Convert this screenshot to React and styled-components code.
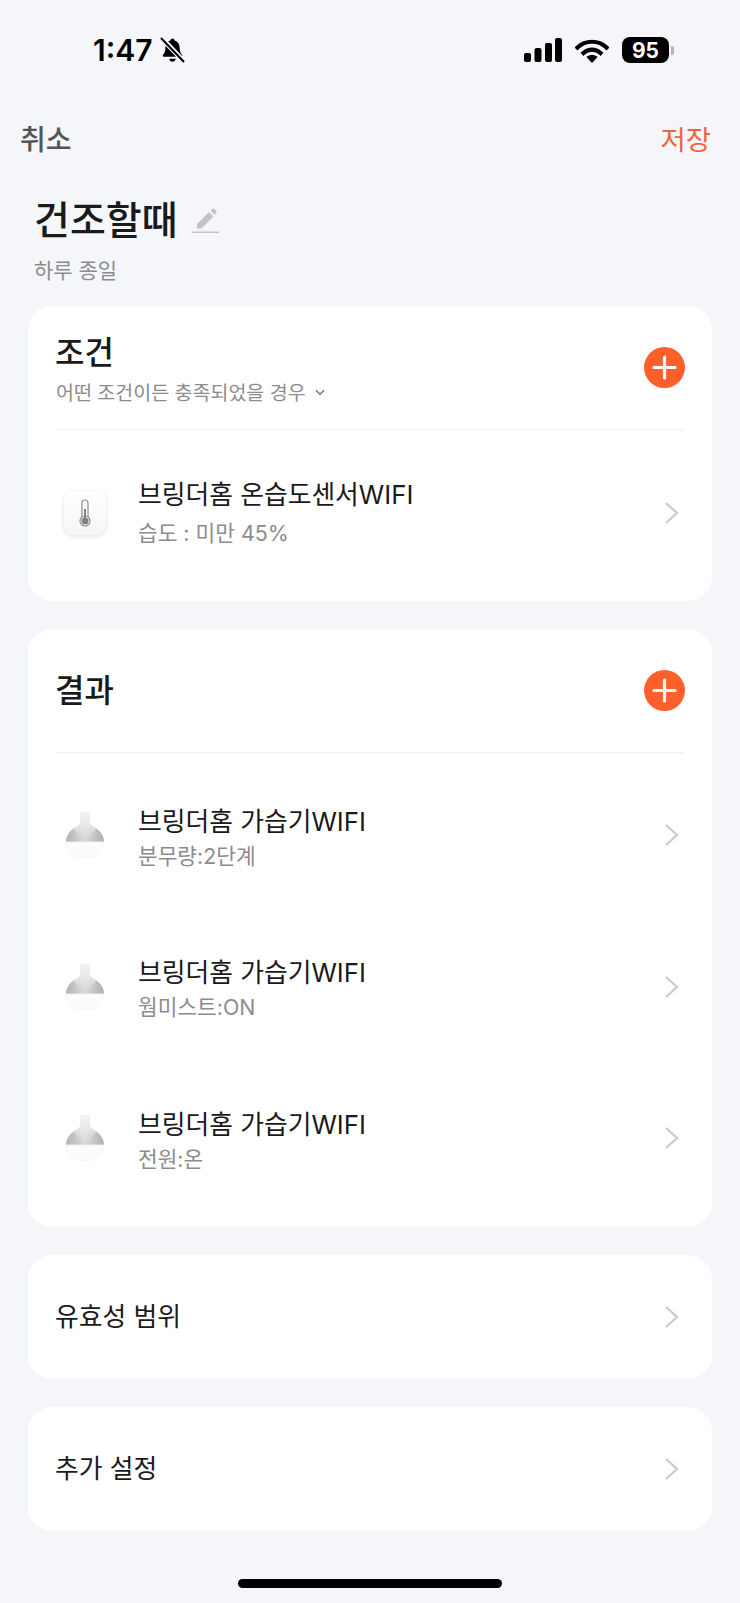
import React from "react";
import styled, { createGlobalStyle } from "styled-components";

const GlobalStyle = createGlobalStyle`
  html, body {
    margin: 0;
    padding: 0;
    background-color: #f5f6fa;
  }
  * {
    box-sizing: border-box;
  }
`;

const Page = styled.div`
  width: 740px;
  height: 1603px;
  overflow: hidden;
  background-color: #f5f6fa;
  font-family: "Inter", "Noto Sans CJK KR", sans-serif;
  color: #1a1a1a;
  display: flex;
  flex-direction: column;
`;

const StatusBar = styled.div`
  height: 100px;
  padding: 36px 66px 0 93px;
  display: flex;
  align-items: flex-start;
  justify-content: space-between;
`;

const StatusLeft = styled.div`
  display: flex;
  align-items: center;
  gap: 7px;
  height: 28px;
`;

const Clock = styled.span`
  font-family: "Inter", sans-serif;
  font-size: 30px;
  font-weight: 600;
  line-height: 28px;
  color: #000;
`;

const StatusRight = styled.div`
  display: flex;
  align-items: center;
  gap: 13px;
  height: 28px;
`;

const BatteryWrap = styled.div`
  display: flex;
  align-items: center;
  gap: 2px;
`;

const BatteryBody = styled.div`
  width: 47px;
  height: 26px;
  border-radius: 8px;
  background-color: #000;
  color: #fff;
  font-family: "Inter", sans-serif;
  font-size: 21px;
  font-weight: 700;
  display: flex;
  align-items: center;
  justify-content: center;
`;

const BatteryCap = styled.div`
  width: 3px;
  height: 9px;
  border-radius: 0 2px 2px 0;
  background-color: #b5b5b5;
`;

const NavBar = styled.div`
  height: 80px;
  padding: 0 29px 0 20px;
  display: flex;
  align-items: center;
  justify-content: space-between;
`;

const NavButton = styled.button`
  border: none;
  background: none;
  padding: 0;
  font-family: inherit;
  font-size: ${(props) => (props.save ? 27.5 : 28)}px;
  font-weight: ${(props) => (props.save ? 400 : 500)};
  line-height: 36px;
  color: ${(props) => (props.save ? "#f2653a" : "#555")};
`;

const Header = styled.div`
  padding: 16px 34px 0;
  height: 126px;
`;

const TitleRow = styled.div`
  display: flex;
  align-items: center;
  gap: 14px;
  height: 48px;
`;

const Title = styled.h1`
  margin: 0;
  font-size: 39px;
  font-weight: 500;
  line-height: 48px;
  color: #1a1a1a;
`;

const Subtitle = styled.div`
  margin-top: 12px;
  font-size: 21px;
  line-height: 30px;
  color: #8c8c8c;
`;

const Cards = styled.div`
  padding: 0 28px;
  display: flex;
  flex-direction: column;
  gap: 28px;
`;

const Card = styled.section`
  background-color: #fff;
  border-radius: 24px;
  padding: 0 28px;
`;

const CardHeader = styled.div`
  height: 124px;
  display: flex;
  align-items: center;
  justify-content: space-between;
  border-bottom: 1px solid #f0f0f2;
`;

const CardHeading = styled.div`
  padding-top: 4px;
`;

const CardTitle = styled.h2`
  margin: 0 0 0 -1px;
  font-size: 32px;
  font-weight: 500;
  line-height: 40px;
  color: #1a1a1a;
`;

const CardSub = styled.div`
  margin-top: 6px;
  display: flex;
  align-items: center;
  gap: 9px;
  font-size: 19.500px;
  line-height: 28px;
  color: #8c8c8c;
`;

const AddButton = styled.button`
  width: 41px;
  height: 41px;
  margin-right: -1px;
  padding: 0;
  border: none;
  border-radius: 50%;
  background-color: #ff5f2a;
  display: flex;
  align-items: center;
  justify-content: center;
`;

const DeviceList = styled.div`
  padding: ${(props) => props.padTop}px 0 ${(props) => props.padBottom}px;
  display: flex;
  flex-direction: column;
  gap: ${(props) => props.gap || 0}px;
`;

const DeviceRow = styled.div`
  height: 72px;
  display: flex;
  align-items: center;
`;

const DeviceIcon = styled.div`
  width: 55px;
  margin-right: 27px;
  padding-left: 2px;
  display: flex;
  align-items: center;
  justify-content: center;
`;

const DeviceText = styled.div`
  flex: 1;
  padding-top: ${(props) => (props.compact ? 5 : 0)}px;
`;

const DeviceName = styled.div`
  font-size: 25.800px;
  line-height: 34px;
  color: #1a1a1a;
`;

const DeviceSub = styled.div`
  margin-top: ${(props) => (props.compact ? 2 : 6)}px;
  font-size: 21.400px;
  line-height: 30px;
  color: #8c8c8c;
`;

const Chevron = styled.svg`
  width: 16px;
  height: 24px;
  margin-right: 4px;
  flex-shrink: 0;
`;

const LinkCard = styled(Card)`
  height: 124px;
  display: flex;
  align-items: center;
  justify-content: space-between;
`;

const LinkLabel = styled.div`
  margin-left: -1px;
  font-size: 25.800px;
  line-height: 34px;
  color: #1a1a1a;
`;

const HomeBar = styled.div`
  width: 264px;
  height: 9px;
  margin: auto auto 15px;
  border-radius: 5px;
  background-color: #000;
`;

const SensorTile = styled.svg`
  filter: drop-shadow(0 1px 2px rgba(0, 0, 0, 0.12));
`;

const Plus = () => (
  <svg width="25" height="25" viewBox="0 0 25 25">
    <path d="M12.5 2v21M2 12.5h21" stroke="#fff" strokeWidth="3.2" strokeLinecap="round" />
  </svg>
);

const RowChevron = () => (
  <Chevron viewBox="0 0 16 24">
    <path d="M2 2l11 10L2 22" fill="none" stroke="#cbcbcb" strokeWidth="2.2" />
  </Chevron>
);

const BellSlash = () => (
  <svg width="25" height="26" viewBox="0 0 25 26">
    <path
      d="M12.5 1.5c1.2 0 2 .8 2.1 1.9 3.2.9 5 3.6 5 7.2 0 3.6.8 5.6 2.4 7.2.7.8.3 2-.8 2H3.800c-1.100 0-1.500-1.200-.8-2 1.600-1.600 2.400-3.600 2.400-7.200 0-3.600 1.800-6.300 5-7.200.1-1.100.9-1.900 2.100-1.900zM9.300 21.800h6.400c-.2 1.700-1.500 3-3.200 3s-3-1.300-3.200-3z"
      fill="#000"
    />
    <path d="M2 1.500L23.500 24" stroke="#f5f6fa" strokeWidth="5" />
    <path d="M1 1l23 24" stroke="#000" strokeWidth="2" />
  </svg>
);

const Signal = () => (
  <svg width="38" height="24" viewBox="0 0 38 24">
    <rect x="0" y="15" width="7" height="9" rx="2" fill="#000" />
    <rect x="10.500" y="10" width="7" height="14" rx="2" fill="#000" />
    <rect x="21" y="5" width="7" height="19" rx="2" fill="#000" />
    <rect x="31" y="0" width="7" height="24" rx="2" fill="#000" />
  </svg>
);

const Wifi = () => (
  <svg width="34" height="25" viewBox="0 0 34 25">
    <path d="M2.500 9.500C10.500 1.800 23.500 1.800 31.500 9.500" fill="none" stroke="#000" strokeWidth="4.200" strokeLinecap="square" />
    <path d="M8.500 15C13.500 10.500 20.500 10.500 25.500 15" fill="none" stroke="#000" strokeWidth="4.200" strokeLinecap="square" />
    <path d="M17 25l-5.600-6c3.200-2.600 8-2.600 11.200 0z" fill="#000" />
  </svg>
);

const PencilIcon = () => (
  <svg width="28" height="28" viewBox="0 0 28 28">
    <path d="M5 18L17 6l4.500 4.500L9.500 22.500H5z" fill="#c4c4c4" />
    <path d="M18.500 4.500l1.500-1.500c.8-.7 1.700-.7 2.400 0l1.600 1.600c.7.700.7 1.600 0 2.400L22.500 9z" fill="#c4c4c4" />
    <rect x="0" y="25.500" width="27" height="1.500" fill="#c4c4c4" />
  </svg>
);

const Caret = () => (
  <svg width="10" height="7" viewBox="0 0 10 7">
    <path d="M1 1.200l4 4 4-4" fill="none" stroke="#777" strokeWidth="1.500" />
  </svg>
);

const SensorIcon = () => (
  <SensorTile width="46" height="48" viewBox="0 0 46 48">
    <defs>
      <linearGradient id="tile" x1="0" y1="0" x2="0" y2="1">
        <stop offset="0" stopColor="#ffffff" />
        <stop offset="1" stopColor="#f6f6f6" />
      </linearGradient>
    </defs>
    <rect x="2" y="2" width="42" height="44" rx="9" fill="url(#tile)" />
    <rect x="20" y="11" width="6" height="21" rx="3" fill="#fff" stroke="#8a8d92" strokeWidth="1.200" />
    <circle cx="23" cy="32" r="5" fill="#fff" stroke="#8a8d92" strokeWidth="1.200" />
    <circle cx="23" cy="32" r="3.500" fill="#7d8085" />
    <rect x="22" y="20" width="2" height="10" fill="#7d8085" />
  </SensorTile>
);

const HumidifierIcon = ({ id }) => (
  <svg width="40" height="48" viewBox="0 0 40 48">
    <defs>
      <linearGradient id={id} x1="0" y1="0" x2="1" y2="0">
        <stop offset="0" stopColor="#b4b4b4" />
        <stop offset="0.5" stopColor="#dadada" />
        <stop offset="1" stopColor="#afafaf" />
      </linearGradient>
      <linearGradient id={`${id}-fade`} x1="0" y1="0" x2="0" y2="1">
        <stop offset="0" stopColor="#f4f4f4" />
        <stop offset="0.45" stopColor="#e9e9e9" />
        <stop offset="1" stopColor="#e9e9e9" stopOpacity="0" />
      </linearGradient>
    </defs>
    <path
      d="M15.500 1h9v9c0 3.200 1.500 4.500 4 5.800C34.500 19 39 24 39 31H1c0-7 4.500-12 10.500-15.200 2.500-1.300 4-2.600 4-5.800z"
      fill={`url(#${id})`}
    />
    <path
      d="M15.500 1h9v9c0 3.200 1.500 4.500 4 5.800 1 .5 1.900 1.100 2.800 1.800L24 28h-8L8.700 17.600c.9-.7 1.800-1.300 2.800-1.800 2.500-1.300 4-2.600 4-5.800z"
      fill={`url(#${id}-fade)`}
    />
    <path
      d="M1 31h38c-.3 7.500-5 13-11.500 15-1 .3-14 .3-15 0C6 44 1.300 38.500 1 31z"
      fill="#fcfcfc"
      stroke="#f2f2f2"
      strokeWidth="0.800"
    />
  </svg>
);

const conditions = [{ name: "브링더홈 온습도센서WIFI", sub: "습도 : 미만 45%" }];

const results = [
  { name: "브링더홈 가습기WIFI", sub: "분무량:2단계" },
  { name: "브링더홈 가습기WIFI", sub: "웜미스트:ON" },
  { name: "브링더홈 가습기WIFI", sub: "전원:온" },
];

const App = () => {
  return (
    <Page>
      <GlobalStyle />
      <StatusBar>
        <StatusLeft>
          <Clock>1:47</Clock>
          <BellSlash />
        </StatusLeft>
        <StatusRight>
          <Signal />
          <Wifi />
          <BatteryWrap>
            <BatteryBody>95</BatteryBody>
            <BatteryCap />
          </BatteryWrap>
        </StatusRight>
      </StatusBar>

      <NavBar>
        <NavButton>취소</NavButton>
        <NavButton save>저장</NavButton>
      </NavBar>

      <Header>
        <TitleRow>
          <Title>건조할때</Title>
          <PencilIcon />
        </TitleRow>
        <Subtitle>하루 종일</Subtitle>
      </Header>

      <Cards>
        <Card>
          <CardHeader>
            <CardHeading>
              <CardTitle>조건</CardTitle>
              <CardSub>
                어떤 조건이든 충족되었을 경우
                <Caret />
              </CardSub>
            </CardHeading>
            <AddButton>
              <Plus />
            </AddButton>
          </CardHeader>
          <DeviceList padTop={47} padBottom={52}>
            {conditions.map((item, i) => (
              <DeviceRow key={i}>
                <DeviceIcon>
                  <SensorIcon />
                </DeviceIcon>
                <DeviceText>
                  <DeviceName>{item.name}</DeviceName>
                  <DeviceSub>{item.sub}</DeviceSub>
                </DeviceText>
                <RowChevron />
              </DeviceRow>
            ))}
          </DeviceList>
        </Card>

        <Card>
          <CardHeader>
            <CardTitle>결과</CardTitle>
            <AddButton>
              <Plus />
            </AddButton>
          </CardHeader>
          <DeviceList padTop={46} padBottom={53} gap={79.500}>
            {results.map((item, i) => (
              <DeviceRow key={i}>
                <DeviceIcon>
                  <HumidifierIcon id={`hum${i}`} />
                </DeviceIcon>
                <DeviceText compact>
                  <DeviceName>{item.name}</DeviceName>
                  <DeviceSub compact>{item.sub}</DeviceSub>
                </DeviceText>
                <RowChevron />
              </DeviceRow>
            ))}
          </DeviceList>
        </Card>

        <LinkCard>
          <LinkLabel>유효성 범위</LinkLabel>
          <RowChevron />
        </LinkCard>

        <LinkCard>
          <LinkLabel>추가 설정</LinkLabel>
          <RowChevron />
        </LinkCard>
      </Cards>

      <HomeBar />
    </Page>
  );
};

export default App;
